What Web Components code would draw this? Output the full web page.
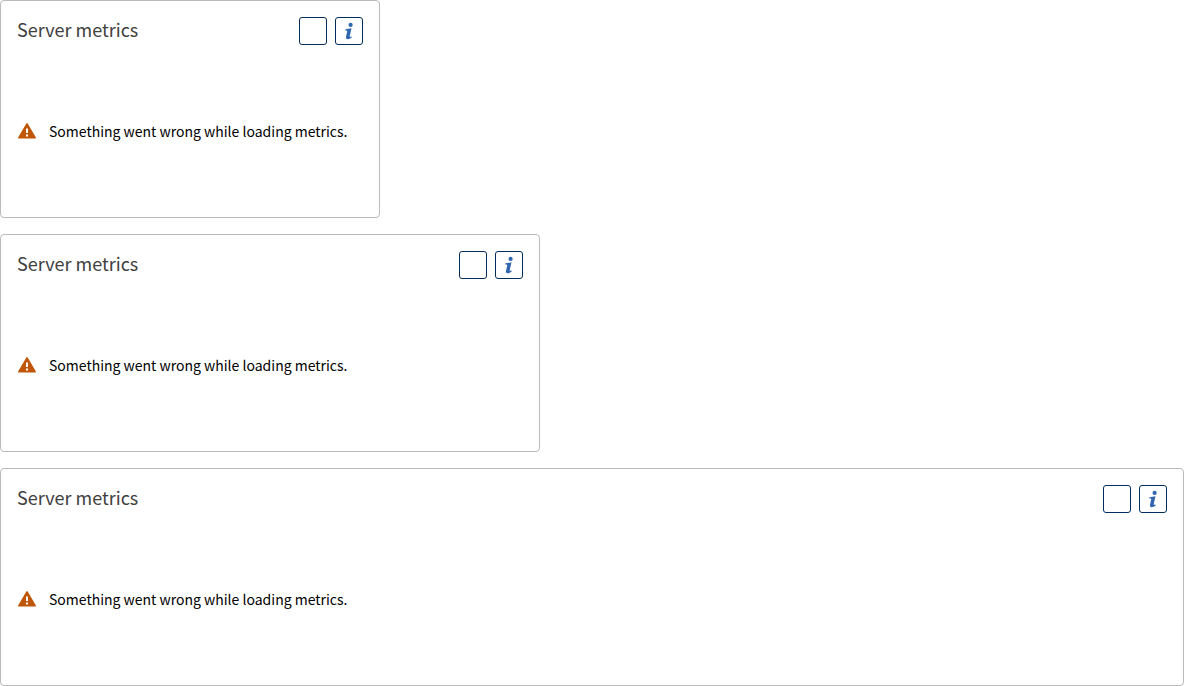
<!DOCTYPE html>
<html lang="en">
<head>
<meta charset="utf-8">
<meta name="viewport" content="width=device-width, initial-scale=1">
<title>Server metrics</title>
<style>
  body { margin: 0; background: #fff; color: #000; font: 14px/20px "Source Sans Pro", "Noto Sans CJK SC", sans-serif; }
</style>
</head>
<body>
<metrics-stack>
  <metrics-card size="small" heading="Server metrics"><error-message>Something went wrong while loading metrics.</error-message></metrics-card>
  <metrics-card size="medium" heading="Server metrics"><error-message>Something went wrong while loading metrics.</error-message></metrics-card>
  <metrics-card heading="Server metrics"><error-message>Something went wrong while loading metrics.</error-message></metrics-card>
</metrics-stack>
<script>
  class MetricsStack extends HTMLElement {
    constructor() {
      super();
      this.attachShadow({ mode: "open" }).innerHTML = `
        <style>:host { display: flex; flex-direction: column; gap: 16px; }</style>
        <slot></slot>`;
    }
  }

  class IconButton extends HTMLElement {
    connectedCallback() {
      if (this.shadowRoot) return;
      this.attachShadow({ mode: "open" }).innerHTML = `
        <style>
          :host { display: block; }
          button { display: grid; place-items: center; box-sizing: border-box; width: 28px; height: 28px; padding: 0;
            border: 1px solid #002d5c; border-radius: 3px; background: #fff; color: #3067b0; cursor: pointer; }
        </style>
        <button type="button"><slot></slot></button>`;
      this.shadowRoot.querySelector("button").setAttribute("aria-label", this.getAttribute("label"));
    }
  }

  class ErrorMessage extends HTMLElement {
    constructor() {
      super();
      this.attachShadow({ mode: "open" }).innerHTML = `
        <style>
          :host { display: flex; align-items: center; gap: 12px; }
          svg { flex: none; display: block; }
        </style>
        <svg width="20" height="20" viewBox="0 0 20 20" aria-hidden="true">
          <path fill="#c05708" fill-rule="evenodd" d="M9.3 2.5Q10 1.5 10.7 2.5L18.9 16.6Q19.3 17.6 18.3 17.6H1.7Q.7 17.6 1.1 16.6ZM9 7.5V12H11V7.5ZM9 13.5V15.5H11V13.5Z"/>
        </svg>
        <span><slot></slot></span>`;
    }
  }

  class MetricsCard extends HTMLElement {
    connectedCallback() {
      if (this.shadowRoot) return;
      this.attachShadow({ mode: "open" }).innerHTML = `
        <style>
          :host { display: flex; flex-direction: column; gap: 16px; box-sizing: border-box; padding: 16px;
            border: 1px solid #bbb; border-radius: 4px; background: #fff; }
          :host([size="small"]) { max-width: 380px; }
          :host([size="medium"]) { max-width: 540px; }
          header { display: flex; align-items: flex-start; justify-content: space-between; }
          h2 { margin: 0; font-size: 18px; line-height: 24px; font-weight: 400; color: #404040; }
          .actions { display: flex; gap: 8px; }
          .body { display: grid; align-items: center; min-height: 140px; }
          svg { display: block; }
        </style>
        <header>
          <h2></h2>
          <div class="actions">
            <icon-button label="Options"></icon-button>
            <icon-button label="Information">
              <svg width="20" height="20" viewBox="0 0 20 20" aria-hidden="true" fill="currentColor">
                <circle cx="11.6" cy="3.9" r="2.1"/>
                <path d="M6.4 8.2Q9.6 7.9 12.5 7.2L10.7 15.2Q10.5 16.3 12.7 15.5V16.6Q10.7 18.3 8.4 18.2Q6.5 18 7 15.8L8.2 10.4Q8.4 9.4 7.6 9.4H6.3Z"/>
              </svg>
            </icon-button>
          </div>
        </header>
        <div class="body"><slot></slot></div>`;
      this.shadowRoot.querySelector("h2").textContent = this.getAttribute("heading");
    }
  }

  customElements.define("metrics-stack", MetricsStack);
  customElements.define("icon-button", IconButton);
  customElements.define("error-message", ErrorMessage);
  customElements.define("metrics-card", MetricsCard);
</script>
</body>
</html>
